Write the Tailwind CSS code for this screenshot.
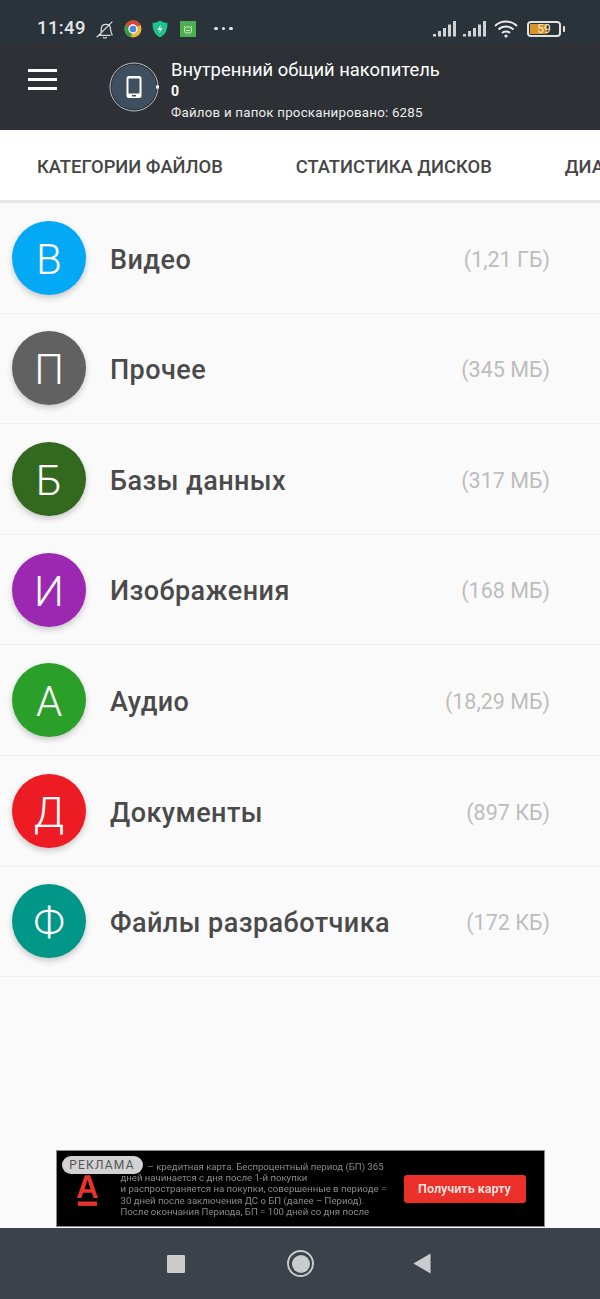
<!DOCTYPE html>
<html lang="ru">
<head>
<meta charset="utf-8">
<script src="https://cdn.jsdelivr.net/npm/@tailwindcss/browser@4"></script>
</head>
<body class="m-0 font-['Roboto',sans-serif]">
<div class="w-[600px] h-[1299px] flex flex-col bg-[#fafafa] overflow-hidden">
  <!-- status bar -->
  <div class="h-[43px] shrink-0 bg-[#2a323a] flex items-center pt-[14px] pl-[37px] pr-[35px] text-[#e4e6e8]">
    <span class="text-[18.500px] font-medium tracking-[0.4px] w-[52px]">11:49</span>
    <svg class="ml-[5px]" width="22" height="22" viewBox="0 0 24 24" fill="none" stroke="#d6d8da" stroke-width="1.400"><path d="M5 19h13M7 19c1-2 1-4 1-7 0-3 2-5 5-5s5 2 5 5c0 3 1 5 2 7M10 21c1 1 3 1 4 0M3 21L20 4"/></svg>
    <svg class="ml-[8px]" width="18" height="18" viewBox="0 0 18 18"><circle cx="9" cy="9" r="8.500" fill="#e8b93a"/><path d="M9 9L1.500 5A8.500 8.500 0 0 1 16.500 5Z" fill="#d9453a"/><path d="M9 9L1.500 5A8.500 8.500 0 0 0 7 17.300Z" fill="#3d9a4c"/><circle cx="9" cy="9" r="4" fill="#4a84e0" stroke="#fff" stroke-width="1.300"/></svg>
    <svg class="ml-[10px]" width="16" height="18" viewBox="0 0 16 18"><path d="M8 .5C10 2 13 3 15.500 3c0 7-2 11.500-7.500 14.500C2.500 14.500.5 10 .5 3 3 3 6 2 8 .5Z" fill="#1fc28a"/><path d="M9 4.500L5.500 10H8l-1 3.500L10.500 8H8Z" fill="#fff"/></svg>
    <div class="ml-[12px] w-[16px] h-[16px] rounded-[1px] bg-[#4caf50] flex items-center justify-center"><svg width="12" height="12" viewBox="0 0 12 12" fill="none" stroke="#d8f0b8" stroke-width="1"><path d="M2 3l1.500 1.500M10 3L8.500 4.500"/><rect x="2.500" y="4" width="7" height="6" rx="2"/><path d="M4 7.500h4"/></svg></div>
    <div class="ml-[18px] flex gap-[4px]"><span class="w-[3.500px] h-[3.500px] rounded-full bg-[#e6e8ea]"></span><span class="w-[3.500px] h-[3.500px] rounded-full bg-[#e6e8ea]"></span><span class="w-[3.500px] h-[3.500px] rounded-full bg-[#e6e8ea]"></span></div>
    <div class="ml-auto flex items-center">
      <svg width="24" height="18" viewBox="0 0 24 18" fill="#cfd2d4"><rect x="0" y="14" width="3" height="2.500"/><rect x="5" y="11" width="3" height="5.500"/><rect x="10" y="8" width="3" height="8.500"/><rect x="15" y="4.500" width="3" height="12"/><rect x="20" y="1" width="3" height="15.500"/></svg>
      <svg class="ml-[6px]" width="24" height="18" viewBox="0 0 24 18" fill="#cfd2d4"><rect x="0" y="14" width="3" height="2.500"/><rect x="5" y="11" width="3" height="5.500"/><rect x="10" y="8" width="3" height="8.500"/><rect x="15" y="4.500" width="3" height="12"/><rect x="20" y="1" width="3" height="15.500"/></svg>
      <svg class="ml-[7px]" width="24" height="20" viewBox="0 0 24 20" fill="none" stroke="#e8eaec" stroke-width="1.900"><path d="M1 7c6-6 16-6 22 0M4.500 10.500c4-4 11-4 15 0M8 14c2-2 6-2 8 0"/><circle cx="12" cy="17" r="1.600" fill="#e8eaec" stroke="none"/></svg>
      <div class="ml-[9px] w-[34px] h-[16px] rounded-[4px] border-[2px] border-[#e2e2e0] p-[1px] relative">
        <div class="w-[17px] h-full bg-[#d8942a]"></div>
        <span class="absolute inset-0 flex items-center justify-center text-[12px] leading-none text-[#f4ead0]">59</span>
      </div>
      <div class="ml-[2px] w-[2px] h-[6px] bg-[#e2e2e0] rounded-r-[1px]"></div>
    </div>
  </div>
  <!-- app header -->
  <div class="h-[87px] shrink-0 bg-[#2d3034] flex items-center text-white">
    <div class="ml-[28px] w-[29px] flex flex-col gap-[6px] -mt-[14px]">
      <span class="h-[3px] bg-white"></span><span class="h-[3px] bg-white"></span><span class="h-[3px] bg-white"></span>
    </div>
    <div class="ml-[52px] mt-[1px] w-[50px] h-[50px] shrink-0">
      <svg width="50" height="50" viewBox="0 0 50 50"><circle cx="25" cy="25" r="22.500" fill="#3e4f60"/><circle cx="25" cy="25" r="24" fill="none" stroke="#b9c0c6" stroke-width="1"/><rect x="17.500" y="14" width="15" height="22" rx="2.500" fill="#fff"/><rect x="19.500" y="16.500" width="11" height="15" fill="#3e4f60"/><rect x="23" y="33" width="4" height="1.500" fill="#3e4f60"/><rect x="47" y="23.500" width="3" height="3" fill="#fff"/></svg>
    </div>
    <div class="ml-[12px] flex flex-col mt-[8px]">
      <div class="text-[18.400px] leading-[24px]">Внутренний общий накопитель</div>
      <div class="text-[14px] leading-[19px] font-bold">0</div>
      <div class="text-[13.300px] leading-[23px] tracking-[0.22px] text-[#eceded]">Файлов и папок просканировано: 6285</div>
    </div>
  </div>
  <!-- tabs -->
  <div class="h-[73px] shrink-0 bg-white border-b-[3px] border-[#e4e4e4] flex items-center pt-[4px] pl-[37px] gap-[73px] whitespace-nowrap overflow-hidden text-[18.350px] font-medium text-[#454545]">
    <span>КАТЕГОРИИ ФАЙЛОВ</span><span>СТАТИСТИКА ДИСКОВ</span><span>ДИАГРАММА</span>
  </div>
  <!-- list -->
  <div class="flex flex-col">
    <div class="h-[110.600px] flex items-center pl-[12px] pr-[50px] border-b border-[#f0f0f0]"><div class="w-[74px] h-[74px] rounded-full bg-[#03a9f4] shadow-[0_3px_6px_rgba(0,0,0,0.2)] flex items-center justify-center pt-[3px] text-[42px] font-light text-white">В</div><span class="ml-[24px] pt-[4px] text-[27px] tracking-[0.45px] font-medium text-[#4a4a4a]">Видео</span><span class="ml-auto pt-[4px] text-[21.500px] text-[#bdbdbd]">(1,21 ГБ)</span></div>
    <div class="h-[110.600px] flex items-center pl-[12px] pr-[50px] border-b border-[#f0f0f0]"><div class="w-[74px] h-[74px] rounded-full bg-[#616161] shadow-[0_3px_6px_rgba(0,0,0,0.2)] flex items-center justify-center pt-[3px] text-[42px] font-light text-white">П</div><span class="ml-[24px] pt-[4px] text-[27px] tracking-[0.45px] font-medium text-[#4a4a4a]">Прочее</span><span class="ml-auto pt-[4px] text-[21.500px] text-[#bdbdbd]">(345 МБ)</span></div>
    <div class="h-[110.600px] flex items-center pl-[12px] pr-[50px] border-b border-[#f0f0f0]"><div class="w-[74px] h-[74px] rounded-full bg-[#33691e] shadow-[0_3px_6px_rgba(0,0,0,0.2)] flex items-center justify-center pt-[3px] text-[42px] font-light text-white">Б</div><span class="ml-[24px] pt-[4px] text-[27px] tracking-[0.45px] font-medium text-[#4a4a4a]">Базы данных</span><span class="ml-auto pt-[4px] text-[21.500px] text-[#bdbdbd]">(317 МБ)</span></div>
    <div class="h-[110.600px] flex items-center pl-[12px] pr-[50px] border-b border-[#f0f0f0]"><div class="w-[74px] h-[74px] rounded-full bg-[#9c27b0] shadow-[0_3px_6px_rgba(0,0,0,0.2)] flex items-center justify-center pt-[3px] text-[42px] font-light text-white">И</div><span class="ml-[24px] pt-[4px] text-[27px] tracking-[0.45px] font-medium text-[#4a4a4a]">Изображения</span><span class="ml-auto pt-[4px] text-[21.500px] text-[#bdbdbd]">(168 МБ)</span></div>
    <div class="h-[110.600px] flex items-center pl-[12px] pr-[50px] border-b border-[#f0f0f0]"><div class="w-[74px] h-[74px] rounded-full bg-[#2aa02a] shadow-[0_3px_6px_rgba(0,0,0,0.2)] flex items-center justify-center pt-[3px] text-[42px] font-light text-white">А</div><span class="ml-[24px] pt-[4px] text-[27px] tracking-[0.45px] font-medium text-[#4a4a4a]">Аудио</span><span class="ml-auto pt-[4px] text-[21.500px] text-[#bdbdbd]">(18,29 МБ)</span></div>
    <div class="h-[110.600px] flex items-center pl-[12px] pr-[50px] border-b border-[#f0f0f0]"><div class="w-[74px] h-[74px] rounded-full bg-[#ed1c24] shadow-[0_3px_6px_rgba(0,0,0,0.2)] flex items-center justify-center pt-[3px] text-[42px] font-light text-white">Д</div><span class="ml-[24px] pt-[4px] text-[27px] tracking-[0.45px] font-medium text-[#4a4a4a]">Документы</span><span class="ml-auto pt-[4px] text-[21.500px] text-[#bdbdbd]">(897 КБ)</span></div>
    <div class="h-[110.600px] flex items-center pl-[12px] pr-[50px] border-b border-[#f0f0f0]"><div class="w-[74px] h-[74px] rounded-full bg-[#009688] shadow-[0_3px_6px_rgba(0,0,0,0.2)] flex items-center justify-center pt-[3px] text-[42px] font-light text-white">Ф</div><span class="ml-[24px] pt-[4px] text-[27px] tracking-[0.45px] font-medium text-[#4a4a4a]">Файлы разработчика</span><span class="ml-auto pt-[4px] text-[21.500px] text-[#bdbdbd]">(172 КБ)</span></div>
  </div>
  <!-- ad -->
  <div class="mt-auto flex justify-center">
    <div class="relative w-[489px] h-[77px] bg-black border border-[#8a8a8a] flex items-center overflow-hidden">
      <svg class="ml-[20px] mt-[4px] shrink-0" width="21" height="34" viewBox="0 0 24 36" fill="#e8322c"><path d="M9 0h6l9 26h-5l-2-6H7l-2 6H0ZM8.500 16h7L12 5Z"/><rect x="1" y="30" width="22" height="5"/></svg>
      <div class="absolute left-[64px] top-[10px] w-[300px] text-[9.600px] leading-[11.200px] text-[#8a8a8a] whitespace-nowrap blur-[0.7px]">
        <div class="pl-[27px]">– кредитная карта. Беспроцентный период (БП) 365</div>
        <div>дней начинается с дня после 1-й покупки</div>
        <div>и распространяется на покупки, совершенные в периоде =</div>
        <div>30 дней после заключения ДС о БП (далее – Период).</div>
        <div>После окончания Периода, БП = 100 дней со дня после</div>
      </div>
      <div class="absolute left-[347px] top-[24px] w-[122px] h-[28px] rounded-[3px] bg-[#ea3028] flex items-center justify-center text-[12.500px] font-bold text-[#f8e0dc] blur-[0.4px]">Получить карту</div>
      <div class="absolute left-[5px] top-[5px] w-[81px] h-[18px] rounded-full bg-[#d2d2d2] flex items-center justify-center text-[12px] tracking-[1.200px] text-[#555]">РЕКЛАМА</div>
    </div>
  </div>
  <!-- nav bar -->
  <div class="h-[71px] shrink-0 mt-[1px] bg-[#3c4249] flex items-center">
    <div class="ml-[167px] w-[18px] h-[18px] rounded-[1px] bg-[#c9cccd]"></div>
    <div class="ml-[102px] w-[27px] h-[27px] rounded-full border-[2.500px] border-[#c9cccd] p-[2.500px]"><div class="w-full h-full rounded-full bg-[#c9cccd]"></div></div>
    <svg class="ml-[99px]" width="18" height="21" viewBox="0 0 18 22"><path d="M0 11L18 0.500V21.500Z" fill="#c9cccd"/></svg>
  </div>
</div>
</body>
</html>
